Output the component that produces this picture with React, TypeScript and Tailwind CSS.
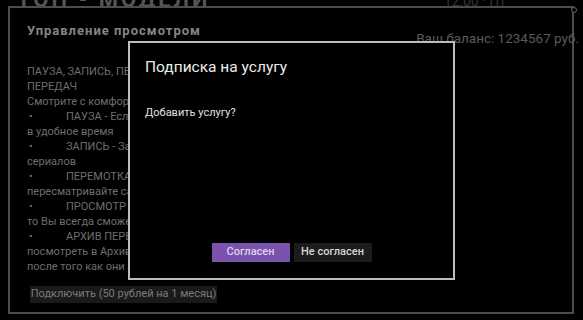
const lines: { bullet?: boolean; text: string }[] = [
  { text: 'ПАУЗА, ЗАПИСЬ, ПЕРЕМОТКА, ПРОСМОТР С НАЧАЛА, АРХИВ' },
  { text: 'ПЕРЕДАЧ' },
  { text: 'Смотрите с комфортом любимые передачи и фильмы' },
  { bullet: true, text: 'ПАУЗА - Если Вас отвлекли, поставьте эфир на паузу' },
  { text: 'в удобное время' },
  { bullet: true, text: 'ЗАПИСЬ - Записывайте любимые передачи, фильмы и' },
  { text: 'сериалов' },
  { bullet: true, text: 'ПЕРЕМОТКА - Перематывайте эфир назад и' },
  { text: 'пересматривайте самые яркие моменты' },
  { bullet: true, text: 'ПРОСМОТР С НАЧАЛА - Если передача уже началась,' },
  { text: 'то Вы всегда сможете посмотреть её с начала' },
  { bullet: true, text: 'АРХИВ ПЕРЕДАЧ - Пропущенные передачи можно' },
  { text: 'посмотреть в Архиве в течение нескольких дней' },
  { text: 'после того как они закончились' },
];

export default function App() {
  return (
    <div
      className="relative w-[583px] h-[320px] bg-black overflow-hidden"
      style={{ fontFamily: 'Roboto, "Liberation Sans", sans-serif' }}
    >
      {/* cut-off page title above the frame */}
      <div className="flex justify-between h-[6px] overflow-hidden px-[17px]">
        <div className="flex items-end h-[6px]">
          <span className="text-[22px] leading-[13px] font-bold tracking-[3px] text-[#555] whitespace-nowrap">
            ТОП - МОДЕЛИ
          </span>
        </div>
        <div className="flex items-end h-[6px] mr-[60px]">
          <span className="text-[14px] leading-[9px] text-[#333] whitespace-nowrap">12:00 · Пт</span>
        </div>
      </div>

      {/* main frame */}
      <div className="relative ml-[8px] w-[566px] h-[308px] border-2 border-[#4d4d4d] pl-[17px] pt-[15px]">
        <div className="absolute right-[-5px] top-[-1px] w-[6px] h-[6px] rounded-full border border-[#6a6a6a] bg-black" />
        <div className="flex justify-between items-start">
          <div className="text-[13px] leading-[16px] font-bold tracking-[1px] text-[#858585] whitespace-nowrap">
            Управление просмотром
          </div>
          <div className="mt-[7px] mr-[-7px] text-[13.5px] leading-[16px] text-[#5a5a5a] whitespace-nowrap">
            Ваш баланс: 1234567 руб.
          </div>
        </div>

        <div className="mt-[18px] text-[11px] leading-[15px] text-[#6e6e6e]">
          {lines.map((l, i) =>
            l.bullet ? (
              <div key={i} className="flex whitespace-nowrap">
                <span className="w-[39px] pl-[2px]">•</span>
                <span>{l.text}</span>
              </div>
            ) : (
              <div key={i} className="whitespace-nowrap">{l.text}</div>
            )
          )}
        </div>

        <div className="mt-[12px] ml-[3px] w-[187px] h-[17px] bg-[#1a1a1a] flex items-center justify-center text-[11px] text-[#7a7a7a] whitespace-nowrap">
          Подключить (50 рублей на 1 месяц)
        </div>
      </div>

      {/* dialog */}
      <div className="absolute left-[128px] top-[41px] w-[327px] h-[239px] border-2 border-[#bdbdbd] bg-black flex flex-col pl-[15px] pt-[14px] pb-[16px]">
        <div className="text-[15.5px] leading-[20px] text-[#ececec] whitespace-nowrap">Подписка на услугу</div>
        <div className="mt-[29px] text-[11px] leading-[14px] text-[#e2e2e2]">Добавить услугу?</div>
        <div className="flex-1" />
        <div className="flex justify-center gap-[4px] pr-[15px]">
          <div className="w-[78px] h-[19px] bg-[#7b52ad] flex items-center justify-center text-[11px] font-medium text-[#ddd3ec]">
            Согласен
          </div>
          <div className="w-[78px] h-[19px] bg-[#1c1c1c] flex items-center justify-center text-[11px] font-medium text-[#d6d6d6]">
            Не согласен
          </div>
        </div>
      </div>
    </div>
  );
}
